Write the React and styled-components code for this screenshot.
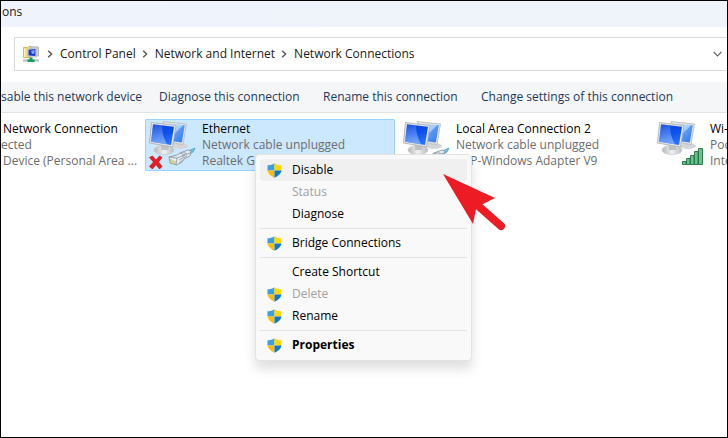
import React from "react";
import styled, { createGlobalStyle, css } from "styled-components";

const GlobalStyle = createGlobalStyle`
  *, *::before, *::after {
    box-sizing: border-box;
  }
  body {
    margin: 0;
    background: #ffffff;
    color: #1a1a1a;
    font-family: "Open Sans", "Noto Sans", sans-serif;
    font-size: 12px;
    line-height: 16px;
  }
  button {
    font: inherit;
    color: inherit;
    border: 0;
    padding: 0;
    background: none;
    white-space: nowrap;
  }
`;

const Window = styled.main`
  display: flex;
  flex-direction: column;
  min-height: 100vh;
  border: 1px solid #000000;
  overflow: hidden;
`;

const TitleBar = styled.header`
  height: 26px;
  padding: 3px 0 0 1px;
  background: linear-gradient(90deg, #eff3fc, #eef4f9);
`;

const AddressArea = styled.div`
  padding: 10px 0 11px 13px;
`;

const AddressBar = styled.nav`
  display: flex;
  align-items: center;
  height: 34px;
  padding: 0 5px 0 8px;
  border: 1px solid #d9d9d9;
  border-right: 0;
`;

const LocationIcon = styled.svg`
  flex: none;
  width: 16px;
  height: 17px;
  margin-right: 2px;
`;

const Crumb = styled.a`
  color: #1a1a1a;
  text-decoration: none;
  white-space: nowrap;
`;

const Separator = styled.svg`
  flex: none;
  width: 6px;
  height: 8px;
  margin: 0 7px 0 6px;
`;

const DropButton = styled.button`
  display: flex;
  margin-left: auto;
`;

const Toolbar = styled.div`
  display: grid;
  grid-template-columns: 158px 164px 158px auto;
  align-items: center;
  height: 31px;
  background: #f5f6f8;
  border-bottom: 1px solid #e2e3e5;
  color: #1e395b;
`;

const Action = styled.button`
  text-align: left;
`;

const Content = styled.section`
  display: flex;
  flex: 1;
  align-items: flex-start;
  gap: 4px;
  padding-top: 6px;
`;

const Tile = styled.article`
  position: relative;
  display: flex;
  flex: none;
  width: ${(p) => (p.$cut ? "140px" : "250px")};
  height: 52px;
  padding: 1px 0 0 ${(p) => (p.$cut ? "0" : "3px")};
  border: 1px solid transparent;
  border-left-width: ${(p) => (p.$cut ? "0" : "1px")};
  border-radius: 1px;
  ${(p) =>
    p.$selected &&
    css`
      background: #cce8ff;
      border-color: #99d1ff;
    `}
`;

const TileText = styled.div`
  flex: 1;
  min-width: 0;
  padding-left: ${(p) => (p.$cut ? "0" : "5px")};
`;

const Name = styled.div`
  color: #000000;
  padding-left: ${(p) => (p.$indent ? "2px" : "0")};
  white-space: nowrap;
`;

const Detail = styled(Name)`
  color: #6d6d6d;
`;

const Menu = styled.div`
  position: absolute;
  z-index: 1;
  top: 34px;
  left: 109px;
  width: 217px;
  padding: 4px;
  background: #f9f9f9;
  border: 1px solid #e3e3e3;
  border-radius: 4px;
  box-shadow: 0 8px 12px rgba(0, 0, 0, 0.13);
`;

const MenuItem = styled.button`
  display: flex;
  align-items: center;
  width: 100%;
  height: 22px;
  padding-left: 7px;
  border-radius: 4px;
  color: #000000;
  font-weight: ${(p) => (p.$bold ? 700 : 400)};
  background: ${(p) => (p.$active ? "#f0f0f0" : "none")};
  &:disabled {
    color: #a0a0a0;
  }
`;

const IconSlot = styled.span`
  display: flex;
  flex: none;
  width: 25px;
`;

const Divider = styled.hr`
  height: 1px;
  margin: 3px 0;
  border: 0;
  background: #e2e2e2;
`;

const Pointer = styled.svg`
  position: absolute;
  z-index: 2;
  top: 53px;
  left: 296px;
  width: 66px;
  height: 60px;
`;

const Chevron = () => (
  <Separator viewBox="0 0 6 8" aria-hidden="true">
    <path d="M1.2 0.8 4.6 4 1.2 7.2" fill="none" stroke="#555" strokeWidth="1.4" />
  </Separator>
);

const NetworkFolderIcon = () => (
  <LocationIcon viewBox="0 0 16 17" aria-hidden="true">
    <path d="M.5 1.500h4l1-1h2v11h-7z" fill="#f4df83" stroke="#d6bb5a" />
    <path d="M1.500 3v8" stroke="#fff3b5" />
    <path d="m7.500.6 8 .5v9l-8-1z" fill="#d2d5d8" stroke="#a7acb1" strokeWidth=".8" />
    <path d="m4.500 3 9-1v9l-9-.5z" fill="#e3e6e8" stroke="#b4b8bb" strokeWidth=".8" />
    <path d="m5.500 3.800 7-.8v7l-7-.5z" fill="#1737c8" />
    <path d="m8 5 3.500-1v3.500L9 8z" fill="#7ba9ff" />
    <path d="M0 14.500h16" stroke="#b5bcc0" strokeWidth="2" />
    <path d="M6.500 11.500h3v2h2V16h-7v-2.500h2z" fill="#12a05c" />
  </LocationIcon>
);

const Shield = () => (
  <svg width="15" height="15" viewBox="0 0 15 15" aria-hidden="true">
    <path d="M7.500.2C5.500 1.700 3 2.200.5 2.200V7.500h7z" fill="#3a9fdd" />
    <path d="M7.500.2C9.500 1.700 12 2.200 14.500 2.200V7.500h-7z" fill="#ffd800" />
    <path d="M.5 7.500h7v7.200C3.500 12.800.8 10.500.5 7.500z" fill="#fbbc09" />
    <path d="M14.500 7.500h-7v7.200c4-1.900 6.700-4.200 7-7.200z" fill="#0d78d1" />
  </svg>
);

const Cable = () => (
  <g strokeLinejoin="round">
    <path d="m37 31 9-4-2 4-6 4z" fill="#65c5e5" stroke="#3b9cc5" strokeWidth=".7" />
    <path d="m20 36 8-2 3-2 8-3 3 1-1 5-6 3-2 3-5 3-7-2z" fill="#e7ebed" stroke="#8798a4" strokeWidth=".9" />
    <path d="m20 36 8 1-1 7m1-7 5-2 8-3M30 39l8-4M30 42l4-3M31 32l5 2-3 2M34 31l4 2" fill="none" stroke="#8194a2" strokeWidth=".8" />
    <path d="M22 38v4m2-3v4m2-3v3" stroke="#c5b85a" />
  </g>
);

const AdapterIcon = ({ id, signal, error }) => (
  <svg width="48" height="48" viewBox="0 0 48 48" aria-hidden="true">
    <defs>
      <linearGradient id={`${id}-front`} x1="0" y1="0" x2="0.3" y2="1">
        <stop offset="0" stopColor="#0a46d2" />
        <stop offset=".55" stopColor="#0c50ee" />
        <stop offset="1" stopColor="#2a6ef8" />
      </linearGradient>
      <linearGradient id={`${id}-gloss`} x1="0" y1="0" x2="0.2" y2="1">
        <stop offset="0" stopColor="#ffffff" stopOpacity="0.05" />
        <stop offset="1" stopColor="#b8dcff" stopOpacity=".5" />
      </linearGradient>
      <linearGradient id={`${id}-back`} x1="0" y1="0" x2="1" y2="1">
        <stop offset="0" stopColor="#dceeff" />
        <stop offset=".5" stopColor="#9ccafc" />
        <stop offset=".52" stopColor="#5b9bf5" />
        <stop offset="1" stopColor="#2d78ee" />
      </linearGradient>
      <linearGradient id={`${id}-base`}>
        <stop offset="0" stopColor="#b4b7ba" />
        <stop offset=".5" stopColor="#f0f1f2" />
        <stop offset="1" stopColor="#b8bbbe" />
      </linearGradient>
    </defs>
    <ellipse cx="31" cy="25" rx="8" ry="3" fill="#d3d6d8" />
    <path d="m14 .6 23.500 2.400-3.500 20.500-10-1.500z" fill="#e4e5e6" stroke="#b4b6b8" strokeWidth=".8" />
    <path d="m16 2.200 19.800 2-3 17.300-8-1z" fill={`url(#${id}-back)`} />
    <ellipse cx="15" cy="29" rx="10" ry="4.500" fill={`url(#${id}-base)`} stroke="#c5c7c9" strokeWidth=".7" />
    <path d="m12 24 7 1 1 4h-8z" fill="#bfc2c4" />
    <path d="m2.500 1.500 24.500 3-3.500 21.500-23-4z" fill="#e6e7e7" stroke="#a9abac" strokeWidth=".8" />
    <path d="m4 3.200 21 2.600-3 18.200-20-3.300z" fill={`url(#${id}-front)`} />
    <path d="m4 3.200 9 1.100c0 7 1.500 12.500 5 19L2 20.700z" fill={`url(#${id}-gloss)`} />
    {!signal && <Cable />}
    {error && (
      <path
        d="m.5 36.500 3-1.500 3.500 4 3.500-4 2.500 1.500-3.500 4.500 3.500 4.500-2.500 2.500-3.500-4.500-3.500 4.500-3-2.500 4-4.500z"
        fill="#ed1c24"
        stroke="#b5161c"
        strokeWidth=".7"
      />
    )}
    {signal && (
      <g fill="#6cc18a" stroke="#1e7241" strokeWidth=".9">
        <path d="M25.500 40.500h3.500v3h-3.500zM29.500 37.500h3.500v6h-3.500zM33.500 34.500h3.500v9h-3.500zM37.500 30.500h3.500v13h-3.500zM41.500 27.500h4v16h-4z" />
      </g>
    )}
  </svg>
);

const crumbs = ["Control Panel", "Network and Internet", "Network Connections"];

const actions = [
  "sable this network device",
  "Diagnose this connection",
  "Rename this connection",
  "Change settings of this connection",
];

const menuItems = [
  { label: "Disable", shield: true, active: true },
  { label: "Status", disabled: true },
  { label: "Diagnose" },
  null,
  { label: "Bridge Connections", shield: true },
  null,
  { label: "Create Shortcut" },
  { label: "Delete", shield: true, disabled: true },
  { label: "Rename", shield: true },
  null,
  { label: "Properties", shield: true, bold: true },
];

const ContextMenu = () => (
  <Menu role="menu">
    {menuItems.map((item, i) =>
      item ? (
        <MenuItem
          key={item.label}
          role="menuitem"
          disabled={item.disabled}
          $active={item.active}
          $bold={item.bold}
        >
          <IconSlot>{item.shield && <Shield />}</IconSlot>
          {item.label}
        </MenuItem>
      ) : (
        <Divider key={i} />
      )
    )}
  </Menu>
);

const App = () => (
  <>
    <GlobalStyle />
    <Window>
      <TitleBar>ons</TitleBar>
      <AddressArea>
        <AddressBar aria-label="Address">
          <NetworkFolderIcon />
          {crumbs.map((crumb) => (
            <React.Fragment key={crumb}>
              <Chevron />
              <Crumb href="#url">{crumb}</Crumb>
            </React.Fragment>
          ))}
          <DropButton aria-label="Previous locations">
            <svg width="9" height="6" viewBox="0 0 9 6" aria-hidden="true">
              <path d="m.7 1 3.800 3.800L8.300 1" fill="none" stroke="#666" strokeWidth="1.200" />
            </svg>
          </DropButton>
        </AddressBar>
      </AddressArea>
      <Toolbar>
        {actions.map((action) => (
          <Action key={action}>{action}</Action>
        ))}
      </Toolbar>
      <Content>
        <Tile $cut>
          <TileText $cut>
            <Name $indent>Network Connection</Name>
            <Detail>ected</Detail>
            <Detail $indent>Device (Personal Area ...</Detail>
          </TileText>
        </Tile>
        <Tile $selected>
          <AdapterIcon id="ethernet" error />
          <TileText>
            <Name>Ethernet</Name>
            <Detail>Network cable unplugged</Detail>
            <Detail>Realtek Gaming</Detail>
          </TileText>
          <ContextMenu />
          <Pointer viewBox="0 0 66 60" aria-hidden="true">
            <path d="m1 1 52 24-14 7-5 4-3 15z" fill="#ed1c24" />
            <path d="m33 30 26 23" stroke="#ed1c24" strokeWidth="8" strokeLinecap="round" />
          </Pointer>
        </Tile>
        <Tile>
          <AdapterIcon id="local" />
          <TileText>
            <Name>Local Area Connection 2</Name>
            <Detail>Network cable unplugged</Detail>
            <Detail>TAP-Windows Adapter V9</Detail>
          </TileText>
        </Tile>
        <Tile>
          <AdapterIcon id="wifi" signal />
          <TileText>
            <Name>Wi-</Name>
            <Detail>Poc</Detail>
            <Detail>Inte</Detail>
          </TileText>
        </Tile>
      </Content>
    </Window>
  </>
);

export default App;
